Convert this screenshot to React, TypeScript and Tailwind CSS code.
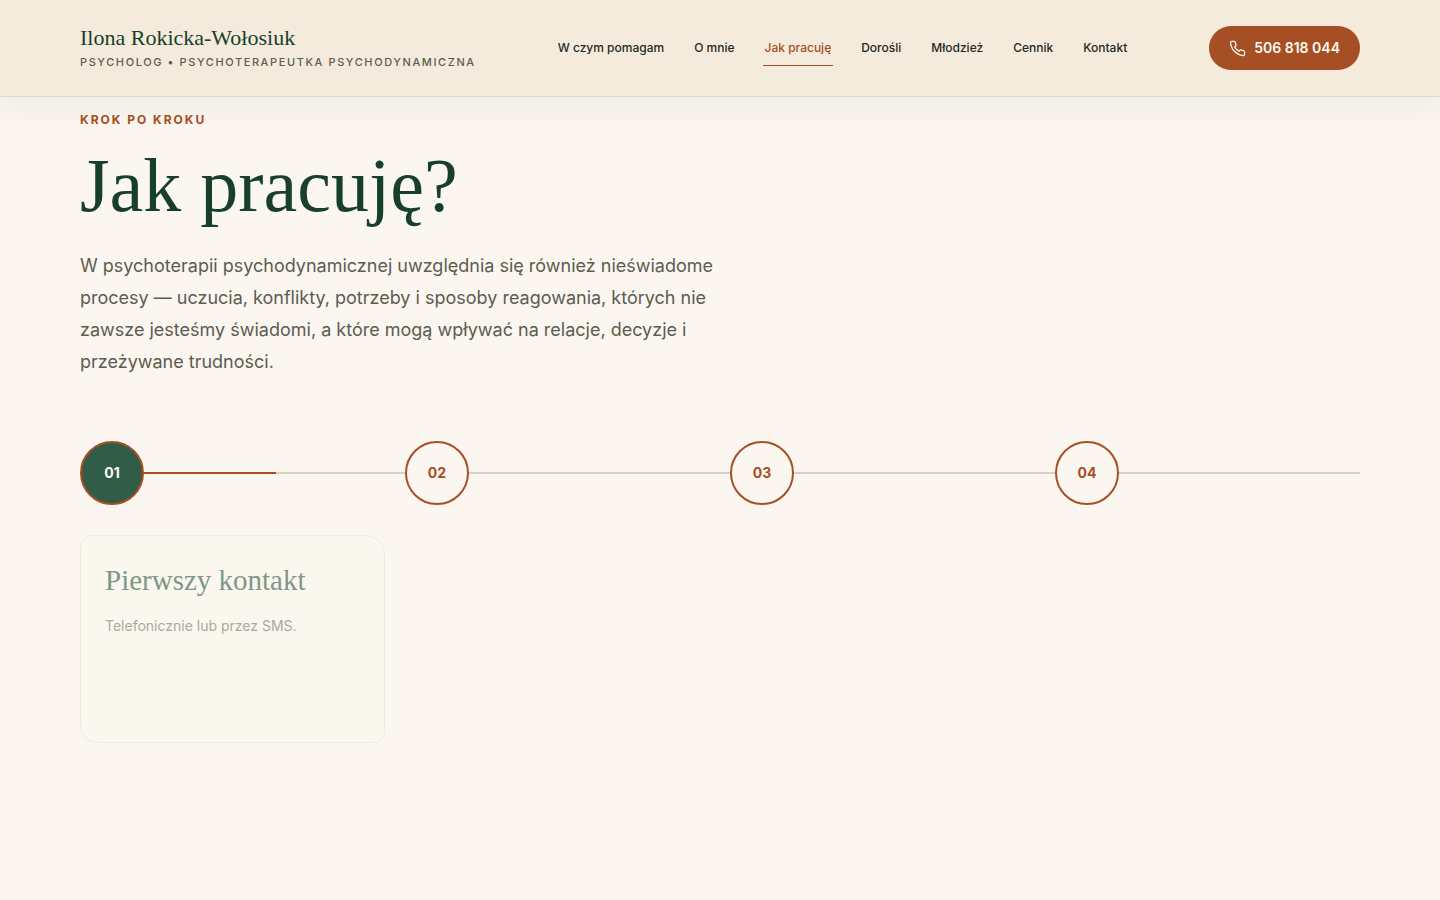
import clsx from 'clsx';

const NAV_ITEMS = [
  { label: 'W czym pomagam', href: '#pomoc' },
  { label: 'O mnie', href: '#o-mnie' },
  { label: 'Jak pracuję', href: '#jak-pracuje' },
  { label: 'Dorośli', href: '#dorosli' },
  { label: 'Młodzież', href: '#mlodziez' },
  { label: 'Cennik', href: '#cennik' },
  { label: 'Kontakt', href: '#kontakt' },
];

const STEPS = [
  { number: '01', title: 'Pierwszy kontakt', text: 'Telefonicznie lub przez SMS.' },
  { number: '02' },
  { number: '03' },
  { number: '04' },
];

const ACTIVE_HREF = '#jak-pracuje';
const ACTIVE_STEP = '01';

const PhoneIcon = () => (
  <svg
    className="size-[17px]"
    viewBox="0 0 24 24"
    fill="none"
    stroke="currentColor"
    strokeWidth="1.8"
    strokeLinecap="round"
    strokeLinejoin="round"
    aria-hidden="true"
  >
    <path d="M22 16.92v3a2 2 0 0 1-2.18 2 19.79 19.79 0 0 1-8.63-3.07 19.5 19.5 0 0 1-6-6 19.79 19.79 0 0 1-3.07-8.67A2 2 0 0 1 4.11 2h3a2 2 0 0 1 2 1.72c.127.96.361 1.903.7 2.81a2 2 0 0 1-.45 2.11L8.09 9.91a16 16 0 0 0 6 6l1.27-1.27a2 2 0 0 1 2.11-.45c.907.339 1.85.573 2.81.7A2 2 0 0 1 22 16.92z" />
  </svg>
);

const Header = () => (
  <header className="sticky top-0 z-10 flex h-[97px] items-center justify-between border-b border-[#dedacb] bg-[#f4ebdd] px-20 shadow-[0_10px_30px_rgba(24,61,43,0.06)]">
    <a href="#start" className="block">
      <span className="block font-['Liberation_Serif',serif] text-[22px] leading-7 text-[#183f2c]">
        Ilona Rokicka-Wołosiuk
      </span>
      <span className="block text-[11px] leading-5 font-medium tracking-[0.145em] text-[#5d5c50] uppercase">
        Psycholog • Psychoterapeutka psychodynamiczna
      </span>
    </a>

    <nav className="flex gap-[26px]" aria-label="Główna nawigacja">
      {NAV_ITEMS.map((item) => (
        <a
          key={item.href}
          href={item.href}
          className={clsx(
            'border-b px-0.5 py-2 text-xs leading-[18px] font-medium',
            item.href === ACTIVE_HREF ? 'border-[#a64f24] text-[#a64f24]' : 'border-transparent text-[#25291f]',
          )}
        >
          {item.label}
        </a>
      ))}
    </nav>

    <a
      href="tel:506818044"
      className="flex h-11 items-center gap-2 rounded-full bg-[#a64f24] px-5 text-sm font-semibold text-[#fffaf2]"
    >
      <PhoneIcon />
      506 818 044
    </a>
  </header>
);

export default function App() {
  return (
    <div className="min-h-screen bg-[#fbf6ef] font-['Inter',sans-serif]">
      <Header />

      <main id="jak-pracuje" className="px-20 pt-[13px]">
        <p className="text-xs leading-5 font-bold tracking-[2px] text-[#a64f24] uppercase">Krok po kroku</p>
        <h1 className="mt-[15px] font-['Liberation_Serif',serif] text-[76px] leading-20 font-medium text-[#183f2c]">Jak pracuję?</h1>
        <p className="mt-[25px] max-w-[660px] text-lg leading-8 text-[#5d5c50]">
          W psychoterapii psychodynamicznej uwzględnia się również nieświadome procesy — uczucia, konflikty, potrzeby i
          sposoby reagowania, których nie zawsze jesteśmy świadomi, a które mogą wpływać na relacje, decyzje i
          przeżywane trudności.
        </p>

        <ol className="relative mt-[63px] grid grid-cols-4 gap-5">
          <li className="absolute inset-x-0 top-[31px] h-0.5 bg-[#dccfc0]" aria-hidden="true">
            <div className="h-full w-[196px] bg-[#a64f24]" />
          </li>
          {STEPS.map((step) => (
            <li key={step.number} className="relative">
              <div
                className={clsx(
                  'flex size-16 items-center justify-center rounded-full border-2 border-[#a64f24] text-sm font-bold',
                  step.number === ACTIVE_STEP ? 'bg-[#315c47] text-[#fffaf2]' : 'bg-[#fbf6ef] text-[#a64f24]',
                )}
              >
                {step.number}
              </div>
              {step.title && (
                <article className="mt-[30px] min-h-52 rounded-tl-xl rounded-tr-[20px] rounded-br-xl rounded-bl-[18px] border border-[#eeebe2] bg-[#faf7ef] p-6">
                  <h2 className="font-['Liberation_Serif',serif] text-[29px] leading-10 text-[#7f9886]">{step.title}</h2>
                  <p className="mt-[14px] text-sm leading-6 text-[#aaa9a0]">{step.text}</p>
                </article>
              )}
            </li>
          ))}
        </ol>
      </main>
    </div>
  );
}
